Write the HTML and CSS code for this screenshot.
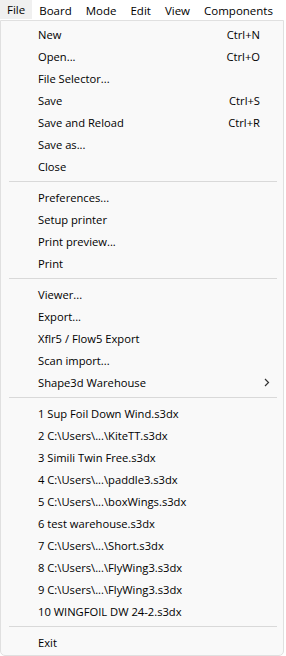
FILE: index.html
```html
<!DOCTYPE html>
<html lang="en">
<head>
  <meta charset="UTF-8" />
  <title>File menu</title>
  <link rel="stylesheet" href="styles.css">
</head>
<body>
  <nav class="menubar">
    <span class="menubar-item active">File</span>
    <span class="menubar-item">Board</span>
    <span class="menubar-item">Mode</span>
    <span class="menubar-item">Edit</span>
    <span class="menubar-item">View</span>
    <span class="menubar-item">Components</span>
  </nav>

  <div class="dropdown">
    <div class="item"><span>New</span><span class="shortcut">Ctrl+N</span></div>
    <div class="item"><span>Open...</span><span class="shortcut">Ctrl+O</span></div>
    <div class="item"><span>File Selector...</span></div>
    <div class="item"><span>Save</span><span class="shortcut">Ctrl+S</span></div>
    <div class="item"><span>Save and Reload</span><span class="shortcut">Ctrl+R</span></div>
    <div class="item"><span>Save as...</span></div>
    <div class="item"><span>Close</span></div>
    <div class="separator"></div>
    <div class="item"><span>Preferences...</span></div>
    <div class="item"><span>Setup printer</span></div>
    <div class="item"><span>Print preview...</span></div>
    <div class="item"><span>Print</span></div>
    <div class="separator"></div>
    <div class="item"><span>Viewer...</span></div>
    <div class="item"><span>Export...</span></div>
    <div class="item"><span>Xflr5 / Flow5 Export</span></div>
    <div class="item"><span>Scan import...</span></div>
    <div class="item submenu">
      <span>Shape3d Warehouse</span>
      <svg class="arrow" width="6" height="9" viewBox="0 0 6 9"><path d="M1 1 L4.5 4.5 L1 8" fill="none" stroke="#333" stroke-width="1.2"/></svg>
    </div>
    <div class="separator"></div>
    <div class="item"><span>1 Sup Foil Down Wind.s3dx</span></div>
    <div class="item"><span>2 C:\Users\...\KiteTT.s3dx</span></div>
    <div class="item"><span>3 Simili Twin Free.s3dx</span></div>
    <div class="item"><span>4 C:\Users\...\paddle3.s3dx</span></div>
    <div class="item"><span>5 C:\Users\...\boxWings.s3dx</span></div>
    <div class="item"><span>6 test warehouse.s3dx</span></div>
    <div class="item"><span>7 C:\Users\...\Short.s3dx</span></div>
    <div class="item"><span>8 C:\Users\...\FlyWing3.s3dx</span></div>
    <div class="item"><span>9 C:\Users\...\FlyWing3.s3dx</span></div>
    <div class="item"><span>10 WINGFOIL DW 24-2.s3dx</span></div>
    <div class="separator"></div>
    <div class="item"><span>Exit</span></div>
  </div>
</body>
</html>
```

FILE: styles.css
```css
* {
  box-sizing: border-box;
  margin: 0;
  padding: 0;
}

body {
  font-family: 'Open Sans', 'Noto Sans', sans-serif;
  font-size: 11.2px;
  color: #000;
  background: #fff;
  width: 286px;
  height: 656px;
  overflow: hidden;
}

.menubar {
  display: flex;
  height: 20px;
  align-items: stretch;
  font-size: 11.5px;
}

.menubar-item {
  display: flex;
  align-items: center;
  padding: 0 7px;
}

.menubar-item.active {
  background-color: #f0f0f0;
  height: 19px;
}

.dropdown {
  width: 284px;
  background-color: #f9f9f9;
  border: 1px solid #e0e0e0;
  border-radius: 0 0 5px 5px;
  padding: 2px 0;
}

.item {
  display: flex;
  align-items: center;
  justify-content: space-between;
  height: 22px;
  padding: 0 23px 0 37px;
}

.shortcut {
  text-align: right;
}

.submenu {
  padding-right: 13px;
}

.arrow {
  display: block;
}

.separator {
  height: 1px;
  background-color: #d9d9d9;
  margin: 4px 6px 4px 8px;
}
```
